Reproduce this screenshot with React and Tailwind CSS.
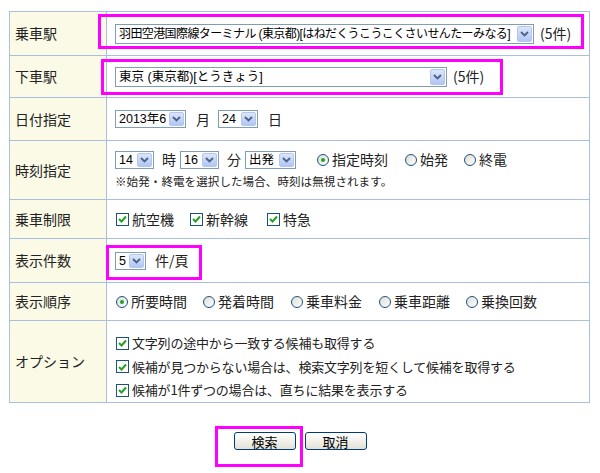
import React from 'react'

const font = { fontFamily: '"Noto Sans CJK JP", "Liberation Sans", sans-serif' }

// XP-style dropdown (static, drawn)
function Select({ value, width, height = 'h-[18px]', className = '', textClass = 'text-[12.5px]' }) {
  return (
    <div
      className={`flex ${height} shrink-0 items-stretch border border-[#7f9db9] bg-white ${className}`}
      style={{ width }}
    >
      <span className={`flex-1 self-center overflow-hidden whitespace-nowrap pl-[3px] leading-[16px] text-black [font-family:'Liberation_Sans','Noto_Sans_CJK_JP',sans-serif] ${textClass}`}>
        {value}
      </span>
      <span className="m-px flex w-[15px] items-center justify-center rounded-[2px] border border-[#b5c6ec] bg-gradient-to-b from-[#dce6fc] to-[#b1c6f4]">
        <svg width="9" height="6" viewBox="0 0 9 6">
          <path d="M1 1 L4.5 4.5 L8 1" fill="none" stroke="#4d6185" strokeWidth="1.8" />
        </svg>
      </span>
    </div>
  )
}

function Radio({ label, checked = false, className = '' }) {
  return (
    <label className={`flex items-center gap-[3px] ${className}`}>
      <span className="flex h-[12px] w-[12px] items-center justify-center rounded-full border border-[#1c5180] bg-gradient-to-br from-[#dcdcd6] to-white">
        {checked && <span className="h-[4px] w-[4px] rounded-full bg-[#21a121]" />}
      </span>
      <span>{label}</span>
    </label>
  )
}

function Check({ label, className = '' }) {
  return (
    <label className={`flex items-center gap-[3px] ${className}`}>
      <span className="flex h-[13px] w-[13px] shrink-0 items-center justify-center border border-[#1c5180] bg-white">
        <svg width="9" height="8" viewBox="0 0 9 8">
          <path d="M1 4 L3.5 6.5 L8 1.5" fill="none" stroke="#21a121" strokeWidth="2" />
        </svg>
      </span>
      <span>{label}</span>
    </label>
  )
}

function Row({ label, height, first = false, children, contentClass = '' }) {
  return (
    <div className={`flex ${height} ${first ? '' : 'border-t border-[#a9bfe0]'}`}>
      <div className="flex w-[97px] shrink-0 items-center border-r border-[#a9bfe0] bg-[#fafae6] pl-[5px]">
        {label}
      </div>
      <div className={`flex flex-1 items-center pl-[8px] ${contentClass}`}>{children}</div>
    </div>
  )
}

function Button({ label }) {
  return (
    <button
      type="button"
      className="flex h-[18px] w-[62px] items-center justify-center rounded-[3px] border border-[#003c74] bg-gradient-to-b from-white to-[#e3e1d6] text-[13px] leading-none text-black"
    >
      {label}
    </button>
  )
}

export default function App() {
  return (
    <div className="relative h-[473px] w-[600px] overflow-hidden bg-white text-[14px] text-[#222]" style={font}>
      <div className="ml-[9px] mt-[11px] w-[581px] border border-[#a9bfe0]">
        <Row label="乗車駅" height="h-[43px]" first>
          <Select
            value="羽田空港国際線ターミナル (東京都)[はねだくうこうこくさいせんたーみなる]"
            width="419px"
            height="h-[20px]"
            textClass="text-[12px] tracking-[-0.6px]"
          />
          <span className="ml-[6px]">(5件)</span>
        </Row>
        <Row label="下車駅" height="h-[42px]">
          <Select value="東京 (東京都)[とうきょう]" width="332px" height="h-[20px]" textClass="text-[12.5px]" />
          <span className="ml-[6px]">(5件)</span>
        </Row>
        <Row label="日付指定" height="h-[43px]">
          <Select value="2013年6" width="71px" />
          <span className="ml-[10px]">月</span>
          <Select value="24" width="40px" className="ml-[8px]" />
          <span className="ml-[10px]">日</span>
        </Row>
        <Row label="時刻指定" height="h-[59px]" contentClass="flex-col !items-start justify-center gap-[3px]">
          <div className="flex items-center">
            <Select value="14" width="39px" />
            <span className="ml-[8px]">時</span>
            <Select value="16" width="39px" className="ml-[4px]" />
            <span className="ml-[8px]">分</span>
            <Select value="出発" width="51px" className="ml-[4px]" />
            <Radio label="指定時刻" checked className="ml-[21px]" />
            <Radio label="始発" className="ml-[17px]" />
            <Radio label="終電" className="ml-[16px]" />
          </div>
          <div className="text-[11.5px] tracking-[0.1px]">※始発・終電を選択した場合、時刻は無視されます。</div>
        </Row>
        <Row label="乗車制限" height="h-[39px]">
          <Check label="航空機" className="ml-[1px]" />
          <Check label="新幹線" className="ml-[16px]" />
          <Check label="特急" className="ml-[19px]" />
        </Row>
        <Row label="表示件数" height="h-[44px]">
          <Select value="5" width="31px" />
          <span className="ml-[9px]">件/頁</span>
        </Row>
        <Row label="表示順序" height="h-[38px]">
          <Radio label="所要時間" checked className="ml-[1px]" />
          <Radio label="発着時間" className="ml-[16px]" />
          <Radio label="乗車料金" className="ml-[17px]" />
          <Radio label="乗車距離" className="ml-[17px]" />
          <Radio label="乗換回数" className="ml-[16px]" />
        </Row>
        <Row label="オプション" height="h-[82px]" contentClass="flex-col !items-start justify-center gap-[4px] pt-[10px] text-[13px] tracking-[-0.2px]">
          <Check label="文字列の途中から一致する候補も取得する" className="ml-[1px]" />
          <Check label="候補が見つからない場合は、検索文字列を短くして候補を取得する" className="ml-[1px]" />
          <Check label="候補が1件ずつの場合は、直ちに結果を表示する" className="ml-[1px]" />
        </Row>
      </div>

      <div className="mt-[29px] flex justify-center gap-[9px]">
        <Button label="検索" />
        <Button label="取消" />
      </div>

      {/* magenta annotation boxes */}
      <div className="pointer-events-none absolute left-[98px] top-[14px] h-[35px] w-[486px] border-[3px] border-[#ff00ff]" />
      <div className="pointer-events-none absolute left-[101px] top-[59px] h-[36px] w-[402px] border-[3px] border-[#ff00ff]" />
      <div className="pointer-events-none absolute left-[106px] top-[245px] h-[35px] w-[96px] border-[3px] border-[#ff00ff]" />
      <div className="pointer-events-none absolute left-[215px] top-[426px] h-[41px] w-[88px] border-[3px] border-[#ff00ff]" />
    </div>
  )
}
